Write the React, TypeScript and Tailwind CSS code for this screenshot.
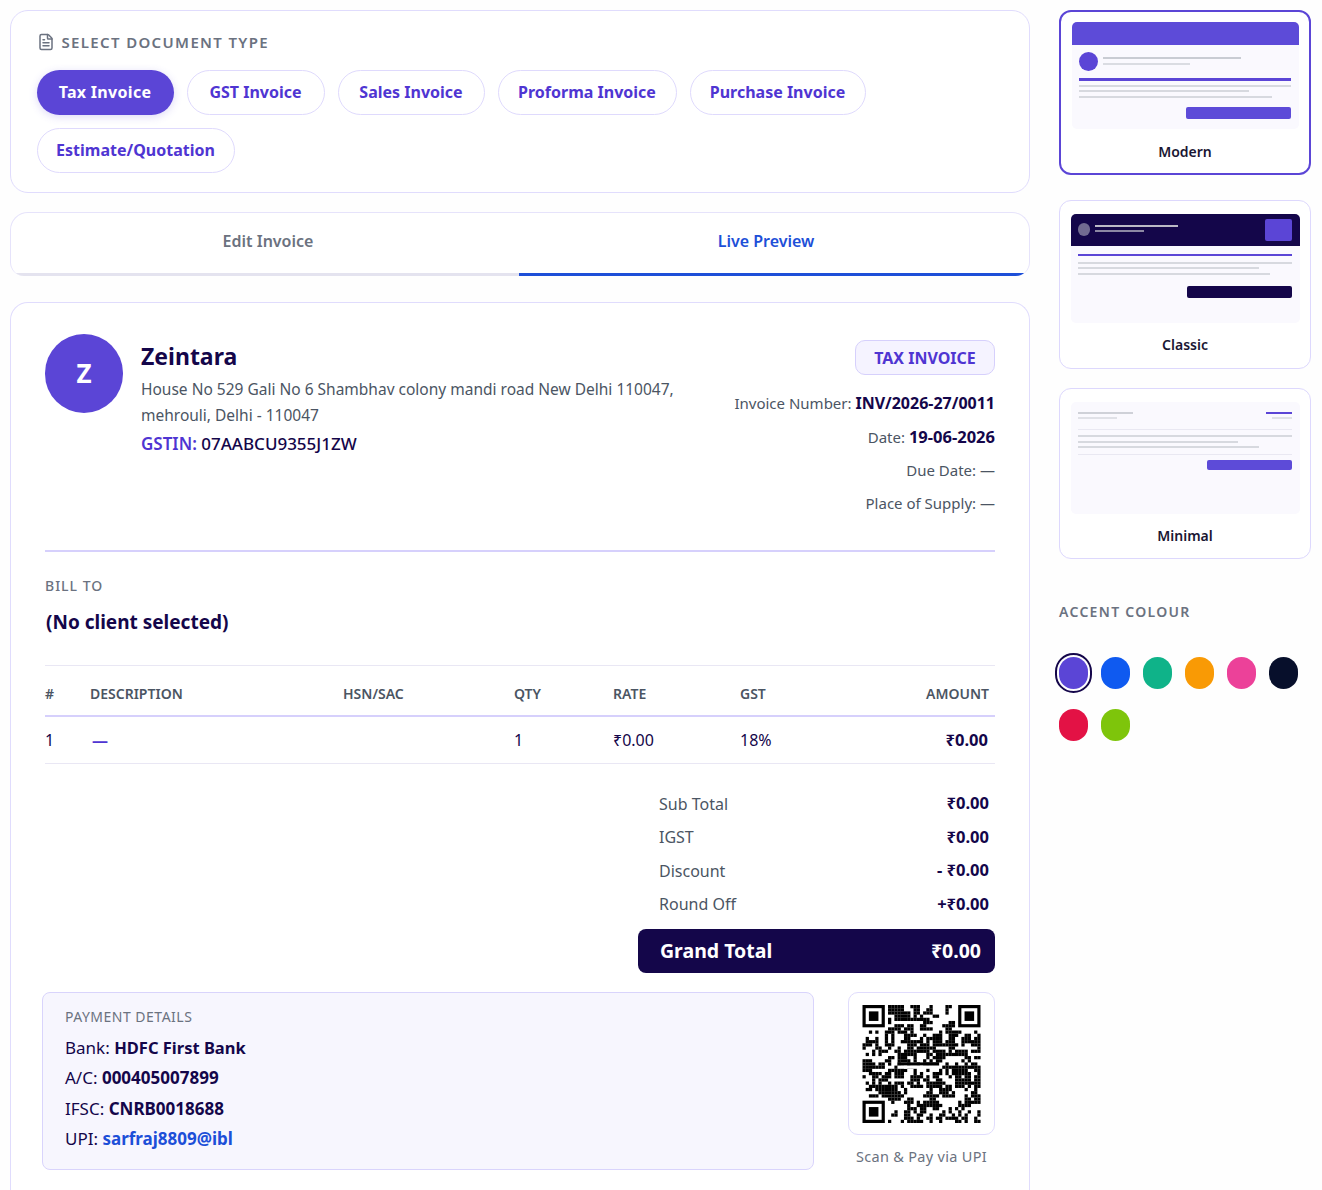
import { FileText } from 'lucide-react';

const FONT = "font-['Noto_Sans','Liberation_Sans',sans-serif]";

const docTypes = [
  { label: 'Tax Invoice', width: 'w-[137px]' },
  { label: 'GST Invoice', width: 'w-[138px]' },
  { label: 'Sales Invoice', width: 'w-[147px]' },
  { label: 'Proforma Invoice', width: 'w-[179px]' },
  { label: 'Purchase Invoice', width: 'w-[176px]' },
  { label: 'Estimate/Quotation', width: 'w-[198px]' },
];

const swatches = ['bg-[#5b45d6]', 'bg-[#0f5af0]', 'bg-[#0fb389]', 'bg-[#f99a05]', 'bg-[#ec4199]', 'bg-[#070f2b]', 'bg-[#e31245]', 'bg-[#7ec50b]'];

const totals = [
  ['Sub Total', '₹0.00'],
  ['IGST', '₹0.00'],
  ['Discount', '- ₹0.00'],
  ['Round Off', '+₹0.00'],
];

const QR_SIZE = 37;

// fake qr modules, neighbours are correlated so it clumps like the real one
function qrCells() {
  const cells: [number, number][] = [];
  const grid: boolean[][] = [];
  let seed = 90210;
  for (let y = 0; y < QR_SIZE; y++) {
    grid[y] = [];
    for (let x = 0; x < QR_SIZE; x++) {
      seed = (seed * 1103515245 + 12345) & 0x7fffffff;
      const r = (seed >> 16) % 100;
      const left = x > 0 && grid[y][x - 1];
      const up = y > 0 && grid[y - 1][x];
      const chance = 36 + (left ? 18 : 0) + (up ? 18 : 0);
      const inFinder = (x < 8 && y < 8) || (x > QR_SIZE - 9 && y < 8) || (x < 8 && y > QR_SIZE - 9);
      const on = !inFinder && r < chance;
      grid[y][x] = on;
      if (on) cells.push([x, y]);
    }
  }
  return cells;
}

function Finder({ x, y }: { x: number; y: number }) {
  return (
    <g>
      <rect x={x} y={y} width="7" height="7" fill="#000" />
      <rect x={x + 1} y={y + 1} width="5" height="5" fill="#fff" />
      <rect x={x + 2} y={y + 2} width="3" height="3" fill="#000" />
    </g>
  );
}

function QrCode() {
  return (
    <svg viewBox="0 0 37 37" className="w-[121px] h-[118px]">
      {qrCells().map(([x, y]) => (
        <rect key={`${x}-${y}`} x={x} y={y} width="1.02" height="1.02" fill="#000" />
      ))}
      <rect x="11" y="18" width="13" height="1" fill="#000" />
      <rect x="11" y="19" width="13" height="1" fill="#fff" />
      <Finder x={0} y={0} />
      <Finder x={30} y={0} />
      <Finder x={0} y={30} />
    </svg>
  );
}

function GreyLines({ widths }: { widths: string[] }) {
  return (
    <div className="flex flex-col gap-[3.5px]">
      {widths.map(w => (
        <div key={w} className={`${w} h-[2px] bg-[#d7d9df]`} />
      ))}
    </div>
  );
}

function ModernThumb() {
  return (
    <div className="h-[107px] bg-[#faf9fe] rounded-[5px]">
      <div className="h-[23px] bg-[#5d4bd8] rounded-t-[5px]" />
      <div className="px-[7.5px]">
        <div className="flex items-center gap-[5px] mt-[7px]">
          <div className="w-[19px] h-[19px] rounded-full bg-[#5b45d6]" />
          <div className="flex flex-col gap-[4px] mb-[2px]">
            <div className="w-[138px] h-[2.5px] bg-[#c9ccd3]" />
            <div className="w-[87px] h-[1.5px] bg-[#dadce2]" />
          </div>
        </div>
        <div className="h-[2.5px] bg-[#5b45d6] mt-[7px]" />
        <div className="mt-[4px]">
          <GreyLines widths={['w-full', 'w-[170px]', 'w-[193px]']} />
        </div>
        <div className="flex justify-end mt-[9px]">
          <div className="w-[105px] h-[12px] rounded-[2px] bg-[#5d4bd8]" />
        </div>
      </div>
    </div>
  );
}

function ClassicThumb() {
  return (
    <div className="h-[109px] bg-[#faf9fe] rounded-[5px]">
      <div className="h-[32px] bg-[#14064a] rounded-t-[5px] flex items-center px-[7.5px]">
        <div className="w-[12px] h-[13px] rounded-full bg-[#726b91]" />
        <div className="flex flex-col gap-[3px] ml-[5px] flex-1 -mt-[2px]">
          <div className="w-[83px] h-[2.5px] bg-[#bbb9c6]" />
          <div className="w-[49px] h-[2px] bg-[#8c88a3]" />
        </div>
        <div className="w-[27px] h-[22px] rounded-[2px] bg-[#5b45d6]" />
      </div>
      <div className="px-[7.5px]">
        <div className="h-[2.5px] bg-[#5b45d6] mt-[8px]" />
        <div className="mt-[5.5px]">
          <GreyLines widths={['w-full', 'w-[181px]', 'w-[192px]']} />
        </div>
        <div className="flex justify-end mt-[11px]">
          <div className="w-[105px] h-[12px] rounded-[2px] bg-[#14064a]" />
        </div>
      </div>
    </div>
  );
}

function MinimalThumb() {
  return (
    <div className="h-[112px] bg-[#faf9fe] rounded-[5px] px-[7.5px] pt-[10px]">
      <div className="flex justify-between">
        <div className="flex flex-col gap-[3px]">
          <div className="w-[55px] h-[2.5px] bg-[#cfd1d8]" />
          <div className="w-[39px] h-[1.5px] bg-[#e0e1e7]" />
        </div>
        <div className="flex flex-col gap-[3px] items-end">
          <div className="w-[26px] h-[2.5px] bg-[#5b45d6]" />
          <div className="w-[20px] h-[1.5px] bg-[#e0e1e7]" />
        </div>
      </div>
      <div className="h-px bg-[#e9e8f2] mt-[10px]" />
      <div className="mt-[5.5px]">
        <GreyLines widths={['w-full', 'w-[160px]', 'w-[181px]']} />
      </div>
      <div className="h-px bg-[#e9e8f2] mt-[6px]" />
      <div className="flex justify-end mt-[5px]">
        <div className="w-[85px] h-[10px] rounded-[2px] bg-[#5d4bd8]" />
      </div>
    </div>
  );
}

function TemplateCard({ name, active, children, className }: { name: string; active?: boolean; children: React.ReactNode; className: string }) {
  return (
    <div className={`${className} rounded-[12px] bg-white px-[10.5px] ${active ? 'border-2 border-[#5b45d6]' : 'border-[1.5px] border-[#ddd8fd]'}`}>
      {children}
      <div className="text-center text-[14px] font-semibold text-[#1a1633] leading-[20px] mt-[12.5px]">{name}</div>
    </div>
  );
}

export default function App() {
  return (
    <div className={`${FONT} h-[1190px] overflow-hidden bg-[#fefefe] flex gap-[29px] pl-[10px] pr-[10px] pt-[10px] text-[#14064a]`}>
      <main className="w-[1020px] shrink-0">
        <section className="h-[183px] rounded-[18px] border-[1.5px] border-[#e0dcfd] bg-white px-[25.5px] pt-[21px]">
          <div className="flex items-center gap-[7px] h-[20px]">
            <FileText className="w-[18px] h-[18px] text-[#6b7280]" strokeWidth={2} />
            <h2 className="text-[15px] font-semibold tracking-[1.35px] text-[#6b7280]">SELECT DOCUMENT TYPE</h2>
          </div>
          <div className="flex flex-wrap gap-x-[13px] gap-y-[13px] mt-[18px]">
            {docTypes.map(({ label, width }, i) => (
              <button
                key={label}
                className={`h-[45px] ${width} pb-[1px] rounded-full text-[16px] font-bold ${i === 0 ? 'bg-[#5b45d6] text-white tracking-[0.3px] shadow-[0_2px_8px_rgba(91,69,214,0.2)]' : 'bg-white border-[1.5px] border-[#dfdafd] text-[#4f35d2]'}`}
              >
                {label}
              </button>
            ))}
          </div>
        </section>

        <section className="h-[64px] mt-[19px] rounded-t-[18px] rounded-b-[14px] border-[1.5px] border-b-0 border-[#e6e3fb] bg-white flex overflow-hidden">
          <button className="w-[508px] pl-[6px] pb-[4px] text-[16px] font-semibold text-[#6b7280] border-b-[3px] border-[#e4e3ef]">Edit Invoice</button>
          <button className="flex-1 pr-[16px] pb-[4px] text-[16px] font-semibold text-[#1d4fd8] border-b-[3px] border-[#1d4fd8]">Live Preview</button>
        </section>

        <section className="mt-[26px] rounded-t-[18px] border-[1.5px] border-b-0 border-[#e0dcfd] bg-white px-[34px] pt-[31px] h-[900px]">
          <div className="h-[218px] flex justify-between border-b-2 border-[#d6d0fc]">
            <div className="flex gap-[18px]">
              <div className="w-[78px] h-[79px] rounded-full bg-[#5b45d6] flex items-center justify-center text-white text-[26px] font-bold shrink-0">Z</div>
              <div className="pt-[6px]">
                <h1 className="text-[23px] font-bold leading-[32px]">Zeintara</h1>
                <p className="text-[15.5px] leading-[26px] text-[#4b5563] mt-[4px] w-[560px]">
                  House No 529 Gali No 6 Shambhav colony mandi road New Delhi 110047, mehrouli, Delhi - 110047
                </p>
                <p className="text-[17px] leading-[24px] mt-[4px] font-medium text-[#14064a]">
                  <span className="text-[#4f35d2] font-semibold">GSTIN:</span> 07AABCU9355J1ZW
                </p>
              </div>
            </div>
            <div className="flex flex-col items-end pt-[6px]">
              <div className="h-[35px] w-[140px] rounded-[10px] border-[1.5px] border-[#d6d0fc] bg-[#f5f3ff] flex items-center justify-center text-[16px] font-bold text-[#4f35d2]">
                TAX INVOICE
              </div>
              <div className="mt-[12px] flex flex-col items-end text-[15px] text-[#4b5563] leading-[33px]">
                <div>Invoice Number: <b className="text-[#14064a] text-[16px] font-bold">INV/2026-27/0011</b></div>
                <div>Date: <b className="text-[#14064a] text-[16.5px] font-bold">19-06-2026</b></div>
                <div>Due Date: —</div>
                <div>Place of Supply: —</div>
              </div>
            </div>
          </div>

          <div className="mt-[24px] text-[14px] font-medium tracking-[1px] text-[#6b7280] leading-[20px]">BILL TO</div>
          <div className="mt-[12px] pl-[1px] text-[19px] font-bold leading-[28px]">(No client selected)</div>

          <div className="mt-[29px]">
            <div className="grid grid-cols-[45px_253px_171px_99px_127px_1fr_auto] items-center h-[52px] pt-[6px] border-t border-b-2 border-t-[#e9e7f4] border-b-[#d6d0fc] text-[14px] font-semibold text-[#4b5563] pr-[6px]">
              <div>#</div>
              <div>DESCRIPTION</div>
              <div>HSN/SAC</div>
              <div>QTY</div>
              <div>RATE</div>
              <div>GST</div>
              <div>AMOUNT</div>
            </div>
            <div className="grid grid-cols-[45px_253px_171px_99px_127px_1fr_auto] items-center h-[47px] border-b border-[#e9e7f4] text-[16px] pr-[7px]">
              <div>1</div>
              <div className="text-[#4f35d2] font-bold pl-[2px]">—</div>
              <div />
              <div>1</div>
              <div>₹0.00</div>
              <div>18%</div>
              <div className="font-bold text-[16.5px]">₹0.00</div>
            </div>
          </div>

          <div className="ml-auto w-[357px] mt-[28px]">
            <div className="pl-[21px] pr-[6px] flex flex-col gap-[10px]">
              {totals.map(([label, value]) => (
                <div key={label} className="flex justify-between items-center h-[23.5px] text-[16px] text-[#4b5563]">
                  <span>{label}</span>
                  <span className="font-bold text-[16.5px] text-[#14064a]">{value}</span>
                </div>
              ))}
            </div>
            <div className="h-[44px] mt-[13px] rounded-[8px] bg-[#14064a] text-white flex justify-between items-center pl-[22px] pr-[14px] text-[19.5px] font-bold">
              <span>Grand Total</span>
              <span>₹0.00</span>
            </div>
          </div>

          <div className="flex justify-between mt-[19px] -ml-[3px]">
            <div className="w-[772px] h-[178px] rounded-[8px] border-[1.5px] border-[#d9d4fc] bg-[#f7f6fe] px-[22px] pt-[14px] text-[17px] leading-[30.3px] text-[#14064a]">
              <div className="text-[14px] leading-[20px] tracking-[0.5px] text-[#6b7280] mb-[6px]">PAYMENT DETAILS</div>
              <div>Bank: <b className="font-bold text-[16.5px]">HDFC First Bank</b></div>
              <div>A/C: <b className="font-bold">000405007899</b></div>
              <div>IFSC: <b className="font-bold">CNRB0018688</b></div>
              <div>UPI: <b className="font-bold text-[#1d4fd8]">sarfraj8809@ibl</b></div>
            </div>
            <div className="w-[147px] flex flex-col items-center">
              <div className="w-[147px] h-[143px] rounded-[10px] border-[1.5px] border-[#e0dcfd] bg-white flex items-center justify-center">
                <QrCode />
              </div>
              <div className="text-[14.5px] tracking-[0.3px] text-[#6b7280] mt-[11px]">Scan &amp; Pay via UPI</div>
            </div>
          </div>
        </section>
      </main>

      <aside className="w-[252px] shrink-0 pt-[0px]">
        <TemplateCard name="Modern" active className="h-[165px] pt-[10px]"><ModernThumb /></TemplateCard>
        <TemplateCard name="Classic" className="h-[169px] mt-[25px] pt-[12.5px]"><ClassicThumb /></TemplateCard>
        <TemplateCard name="Minimal" className="h-[171px] mt-[19px] pt-[12.5px]"><MinimalThumb /></TemplateCard>

        <h3 className="mt-[43px] text-[14px] font-semibold tracking-[1.3px] text-[#6b7280] leading-[20px]">ACCENT COLOUR</h3>
        <div className="flex flex-wrap gap-x-[13px] gap-y-[20px] mt-[35px] w-[250px]">
          {swatches.map((c, i) => (
            <div
              key={c}
              className={`w-[29px] h-[32px] rounded-full ${c} ${i === 0 ? 'outline-2 outline-offset-2 outline-[#14064a]' : ''}`}
            />
          ))}
        </div>
      </aside>
    </div>
  );
}
